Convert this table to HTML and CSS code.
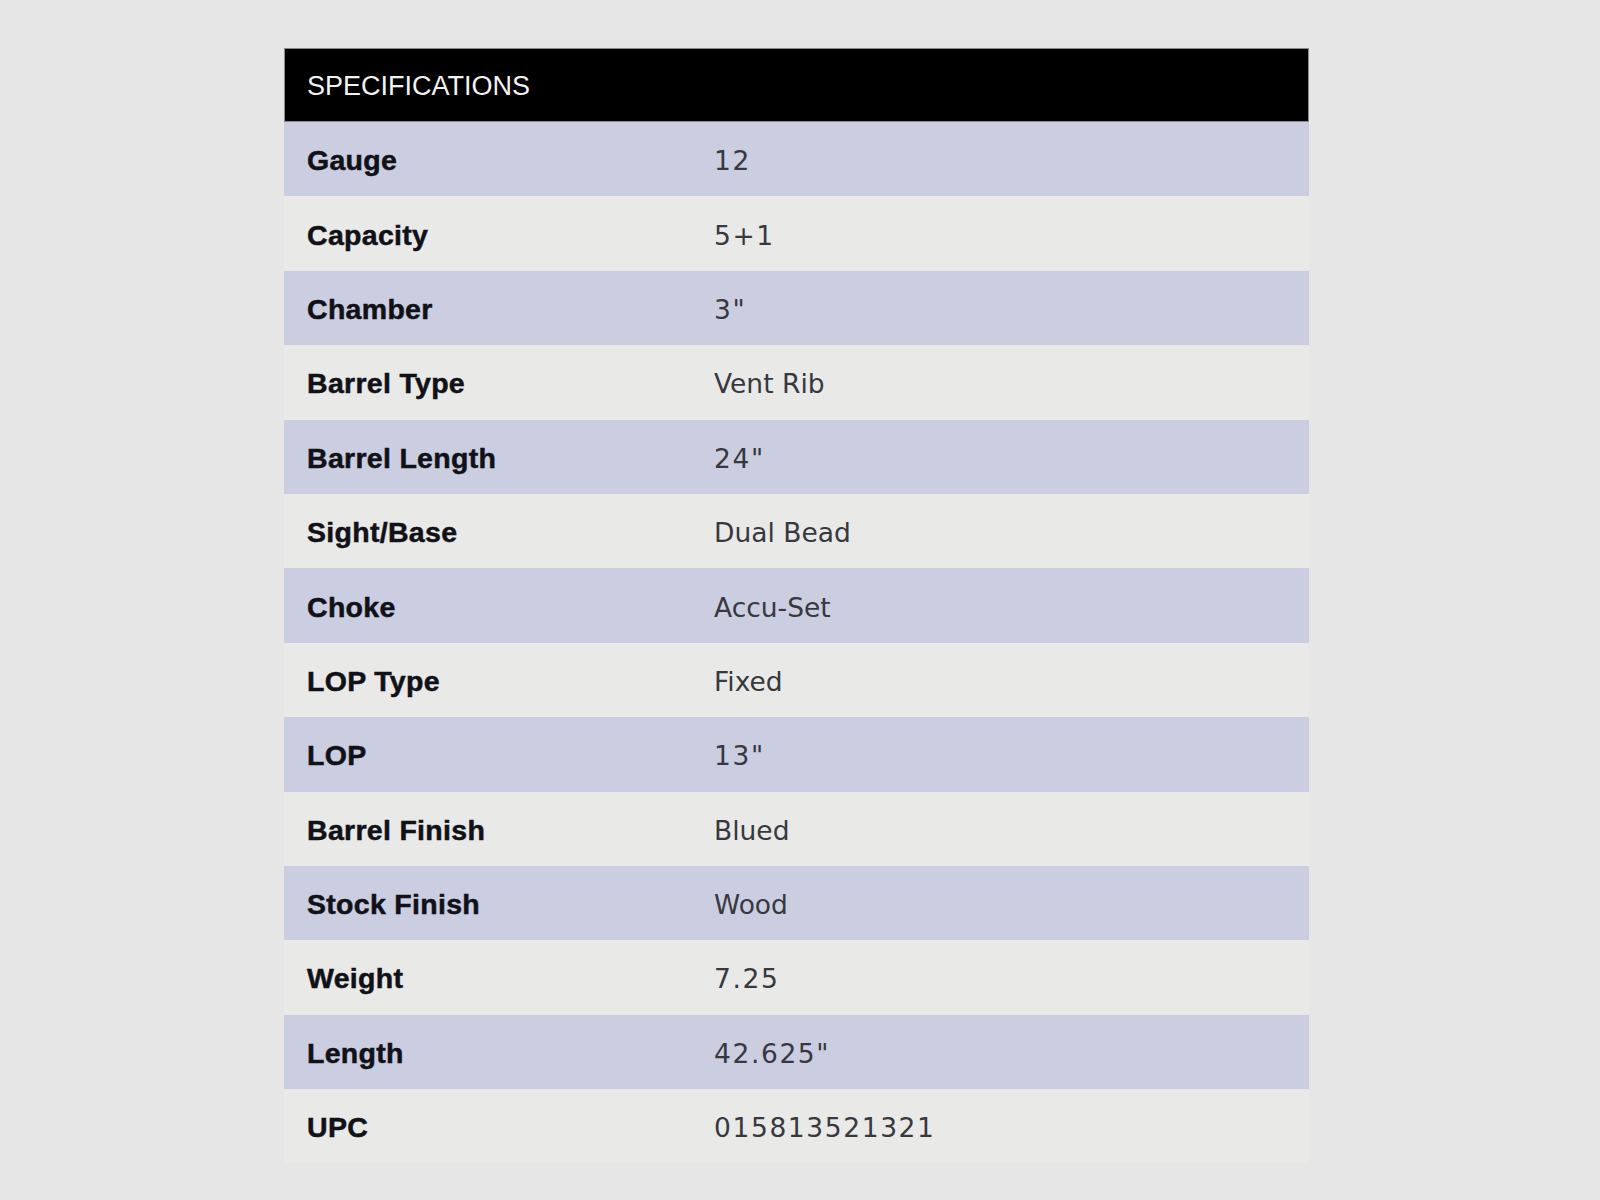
FILE: index.html
```html
<!DOCTYPE html>
<html lang="en">
<head>
<meta charset="utf-8">
<title>Specifications</title>
<link rel="stylesheet" href="styles.css">
</head>
<body>
<div class="page">
  <div class="specs">
    <div class="specs-head">SPECIFICATIONS</div>
    <div class="row alt"><div class="label">Gauge</div><div class="value num">12</div></div>
    <div class="row"><div class="label">Capacity</div><div class="value num">5+1</div></div>
    <div class="row alt"><div class="label">Chamber</div><div class="value num">3"</div></div>
    <div class="row"><div class="label">Barrel Type</div><div class="value">Vent Rib</div></div>
    <div class="row alt"><div class="label">Barrel Length</div><div class="value num">24"</div></div>
    <div class="row"><div class="label">Sight/Base</div><div class="value">Dual Bead</div></div>
    <div class="row alt"><div class="label">Choke</div><div class="value">Accu-Set</div></div>
    <div class="row"><div class="label">LOP Type</div><div class="value">Fixed</div></div>
    <div class="row alt"><div class="label">LOP</div><div class="value num">13"</div></div>
    <div class="row"><div class="label">Barrel Finish</div><div class="value">Blued</div></div>
    <div class="row alt"><div class="label">Stock Finish</div><div class="value">Wood</div></div>
    <div class="row"><div class="label">Weight</div><div class="value num">7.25</div></div>
    <div class="row alt"><div class="label">Length</div><div class="value num">42.625"</div></div>
    <div class="row"><div class="label">UPC</div><div class="value num">015813521321</div></div>
    <div class="mark"></div>
  </div>
</div>
</body>
</html>
```
FILE: styles.css
```css
html, body {
  margin: 0;
  padding: 0;
  background: #e6e6e6;
}
.page {
  padding-top: 48px;
  padding-left: 284px;
}
.specs {
  width: 1025px;
  position: relative;
}
.specs-head {
  height: 74px;
  box-sizing: border-box;
  background: #000;
  border: 1px solid #8a8a8a;
  color: #f2f2f2;
  font-family: "Liberation Sans", Arial, sans-serif;
  font-size: 27px;
  display: flex;
  align-items: center;
  padding-left: 22px;
  padding-top: 2px;
}
.row {
  height: 74.4px;
  box-sizing: border-box;
  padding-top: 3px;
  display: grid;
  grid-template-columns: 430px 1fr;
  align-items: center;
  background: #e9e9e7;
}
.row.alt {
  background: #cbcde0;
}
.label {
  padding-left: 23px;
  font-family: "Liberation Sans", Arial, sans-serif;
  font-weight: bold;
  font-size: 28.5px;
  letter-spacing: 0.3px;
  -webkit-text-stroke: 0.5px #111118;
  color: #111118;
}
.value {
  font-family: "DejaVu Sans", sans-serif;
  font-size: 26.5px;
  color: #38383f;
}
.value.num {
  letter-spacing: 1.6px;
}
.mark {
  position: absolute;
  left: 0;
  bottom: -3px;
  width: 4px;
  height: 2px;
  background: #8a8a8a;
}
```
